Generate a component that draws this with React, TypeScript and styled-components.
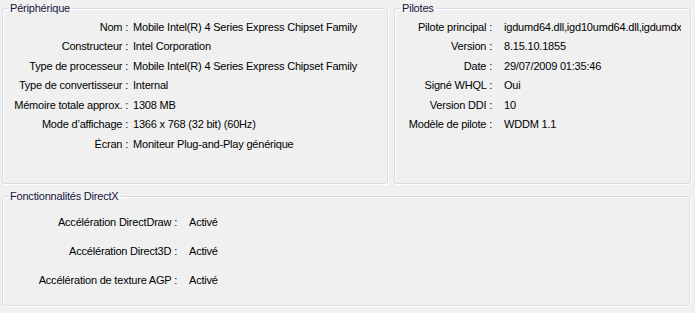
import React from 'react'
import styled, { createGlobalStyle } from 'styled-components'

const GlobalStyle = createGlobalStyle`
    html, body {
        margin: 0;
        padding: 0;
        background: #f0f0f0;
    }
    body {
        font-family: "Liberation Sans", Arial, sans-serif;
        font-size: 11px;
        color: #000;
    }
`;

type Row = [string, string]

const device: Row[] = [
    ['Nom :', 'Mobile Intel(R) 4 Series Express Chipset Family'],
    ['Constructeur :', 'Intel Corporation'],
    ['Type de processeur :', 'Mobile Intel(R) 4 Series Express Chipset Family'],
    ['Type de convertisseur :', 'Internal'],
    ['Mémoire totale approx. :', '1308 MB'],
    ["Mode d’affichage :", '1366 x 768 (32 bit) (60Hz)'],
    ['Écran :', 'Moniteur Plug-and-Play générique'],
]

const drivers: Row[] = [
    ['Pilote principal :', 'igdumd64.dll,igd10umd64.dll,igdumdx32.dll,igd10umd32.dll'],
    ['Version :', '8.15.10.1855'],
    ['Date :', '29/07/2009 01:35:46'],
    ['Signé WHQL :', 'Oui'],
    ['Version DDI :', '10'],
    ['Modèle de pilote :', 'WDDM 1.1'],
]

const directx: Row[] = [
    ['Accélération DirectDraw :', 'Activé'],
    ['Accélération Direct3D :', 'Activé'],
    ['Accélération de texture AGP :', 'Activé'],
]

const App: React.FC = () => {
    return (
        <>
            <GlobalStyle/>
            <Page>
                <TopRow>
                    <Group $width={386}>
                        <Legend>Périphérique</Legend>
                        <InfoGrid $labelWidth={121} $gap={5} $rowHeight={19.5}>
                            {device.map(([label, value]) => (
                                <React.Fragment key={label}>
                                    <Label>{label}</Label>
                                    <Value>{value}</Value>
                                </React.Fragment>
                            ))}
                        </InfoGrid>
                    </Group>
                    <Group $width={297} $padRight={9}>
                        <Legend>Pilotes</Legend>
                        <InfoGrid $labelWidth={93} $gap={12} $rowHeight={19.5}>
                            {drivers.map(([label, value]) => (
                                <React.Fragment key={label}>
                                    <Label>{label}</Label>
                                    <Value>{value}</Value>
                                </React.Fragment>
                            ))}
                        </InfoGrid>
                    </Group>
                </TopRow>
                <BottomGroup>
                    <Legend>Fonctionnalités DirectX</Legend>
                    <InfoGrid $labelWidth={170} $gap={12} $rowHeight={29}>
                        {directx.map(([label, value]) => (
                            <React.Fragment key={label}>
                                <Label>{label}</Label>
                                <Value>{value}</Value>
                            </React.Fragment>
                        ))}
                    </InfoGrid>
                </BottomGroup>
            </Page>
        </>
    )
}

export default App


const Page = styled.div `
    width: 695px;
    height: 313px;
    box-sizing: border-box;
    padding: 2px 0 0 2px;
    display: flex;
    flex-direction: column;
    gap: 6px;
`;

const TopRow = styled.div `
    display: flex;
    gap: 6px;
`;

const Group = styled.fieldset<{ $width: number; $padRight?: number }> `
    box-sizing: border-box;
    width: ${p => p.$width}px;
    height: 182px;
    min-width: 0;
    margin: 0;
    padding: 2px ${p => p.$padRight ?? 4}px 0 4px;
    border: 1px solid #d5dfe5;
    border-radius: 3px;
    box-shadow: 1px 1px 0 #fff, inset 1px 1px 0 #fff;
`;

const BottomGroup = styled(Group) `
    width: 688px;
    height: 116px;
    padding-top: 4px;
`;

const Legend = styled.legend `
    padding: 0 2px 0 1px;
    margin-left: 2px;
    line-height: 13px;
    color: #14143c;
    letter-spacing: -0.2px;
`;

const InfoGrid = styled.div<{ $labelWidth: number; $gap: number; $rowHeight: number }> `
    display: grid;
    grid-template-columns: ${p => p.$labelWidth}px minmax(0, 1fr);
    grid-auto-rows: ${p => p.$rowHeight}px;
    column-gap: ${p => p.$gap}px;
    align-items: center;
    letter-spacing: -0.2px;
`;

const Label = styled.span `
    text-align: right;
    white-space: nowrap;
`;

const Value = styled.span `
    white-space: nowrap;
    overflow: hidden;
`;
